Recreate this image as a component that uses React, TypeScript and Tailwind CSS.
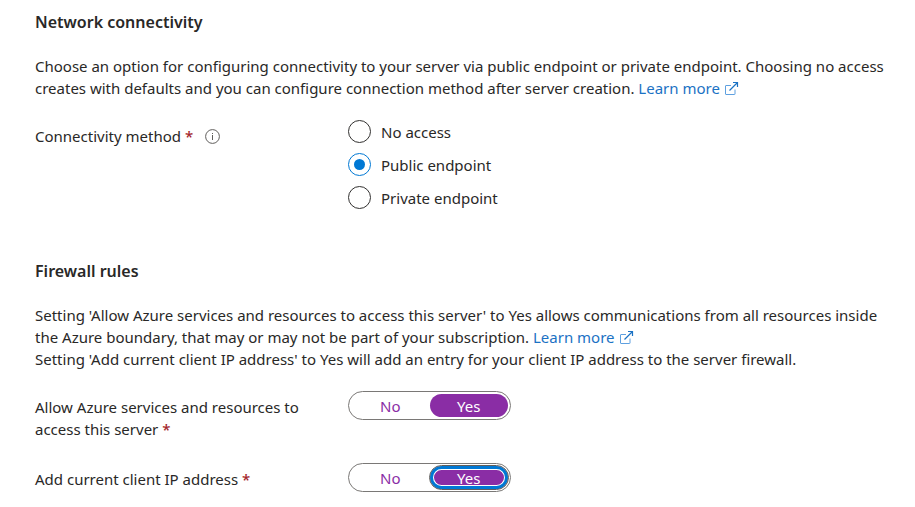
import { useState } from 'react';

function ExternalIcon() {
  return (
    <svg className="ml-1 inline-block size-[15px] align-[-2px]" viewBox="0 0 15 15" fill="none" aria-hidden="true">
      <path d="M7 4.5H2Q1.5 4.5 1.5 5V13Q1.5 13.5 2 13.5H10.5Q11 13.5 11 13V8.5" stroke="#5ea0e0" />
      <path d="M9 1.5H13.5V6M13.5 1.5L5.5 9.5" stroke="#1b72c4" strokeWidth="1.2" />
    </svg>
  );
}

function InfoIcon() {
  return (
    <svg className="size-[15px]" viewBox="0 0 15 15" fill="none" stroke="#605e5c" role="img" aria-label="Info">
      <circle cx="7.5" cy="7.5" r="6.9" />
      <path d="M7.5 6V11M7.5 4V5" />
    </svg>
  );
}

function LearnMore() {
  return (
    <a href="#learn-more" className="text-[#1b72c4]">
      Learn more
      <ExternalIcon />
    </a>
  );
}

function Required() {
  return <span className="font-medium text-[#a4262c]">*</span>;
}

function Radio({ label, checked }: { label: string; checked?: boolean }) {
  return (
    <label className="flex h-[33px] items-center gap-[10px]">
      <input
        type="radio"
        name="connectivity"
        defaultChecked={checked}
        className="grid size-[23px] shrink-0 appearance-none place-items-center rounded-full border border-[#323130] bg-white checked:border-[#0078d4] checked:before:size-[11px] checked:before:rounded-full checked:before:bg-[#0078d4]"
      />
      <span>{label}</span>
    </label>
  );
}

function Toggle({ labelId, focused }: { labelId: string; focused?: boolean }) {
  const [on, setOn] = useState(true);
  const base = 'flex h-[23px] flex-1 items-center justify-center rounded-full';
  const active = focused
    ? 'bg-[#8a2da5] text-white shadow-[inset_0_0_0_3px_#0078d4,inset_0_0_0_4px_#ffffff] outline outline-[#605e5c]'
    : 'bg-[#8a2da5] text-white';
  const idle = 'text-[#8a2da5]';
  return (
    <div role="group" aria-labelledby={labelId} className="flex h-[29px] w-[163px] shrink-0 items-center rounded-full border border-[#7a7876] px-[2px]">
      <button type="button" aria-pressed={!on} onClick={() => setOn(false)} className={`${base} ${on ? idle : active}`}>
        No
      </button>
      <button type="button" aria-pressed={on} onClick={() => setOn(true)} className={`${base} ${on ? active : idle}`}>
        Yes
      </button>
    </div>
  );
}

export default function App() {
  return (
    <main className="bg-white pt-[11px] pr-3 pb-3 pl-[35px] font-['Noto_Sans',sans-serif] text-[15px] leading-[22px] text-[#292827]">
      <section>
        <h2 className="text-[16px] font-semibold">Network connectivity</h2>
        <p className="mt-[22px]">
          Choose an option for configuring connectivity to your server via public endpoint or private endpoint. Choosing no access creates with defaults and you can configure connection method after server creation. <LearnMore />
        </p>
        <div role="radiogroup" aria-labelledby="method" className="mt-4 flex items-start">
          <div className="flex w-[313px] shrink-0 items-center gap-3 pt-[10px]">
            <span id="method">
              Connectivity method <Required />
            </span>
            <InfoIcon />
          </div>
          <div>
            <Radio label="No access" />
            <Radio label="Public endpoint" checked />
            <Radio label="Private endpoint" />
          </div>
        </div>
      </section>

      <section className="mt-[46px]">
        <h2 className="text-[16px] font-semibold">Firewall rules</h2>
        <p className="mt-[22px]">
          Setting 'Allow Azure services and resources to access this server' to Yes allows communications from all resources inside the Azure boundary, that may or may not be part of your subscription. <LearnMore />
        </p>
        <p>Setting 'Add current client IP address' to Yes will add an entry for your client IP address to the server firewall.</p>
        <div className="mt-[21px] flex items-start">
          <div id="azure" className="w-[313px] shrink-0 pt-[5px] pr-8">
            Allow Azure services and resources to access this server <Required />
          </div>
          <Toggle labelId="azure" />
        </div>
        <div className="mt-[23px] flex items-start">
          <div id="client-ip" className="w-[313px] shrink-0 pt-[5px] pr-8">
            Add current client IP address <Required />
          </div>
          <Toggle labelId="client-ip" focused />
        </div>
      </section>
    </main>
  );
}
